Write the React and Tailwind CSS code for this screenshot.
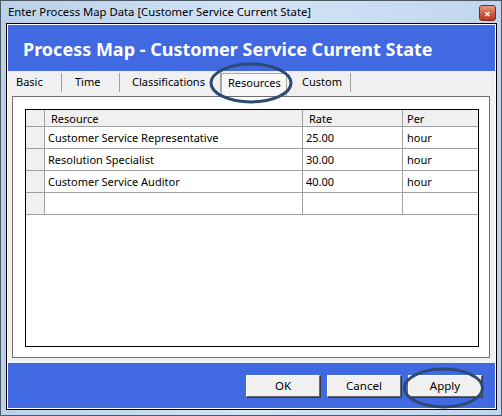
const tabs = [
  { label: 'Basic', w: 'w-[50px]', pl: 'pl-[4px]' },
  { label: 'Time', w: 'w-[58px]', pl: 'pl-[13px]' },
  { label: 'Classifications', w: 'w-[101px]', pl: 'pl-[12px]' },
  { label: 'Resources', w: 'w-[66px]', pl: 'pl-[6px]', active: true },
  { label: 'Custom', w: 'w-[64px]', pl: 'pl-[15px]' },
]

const rows = [
  { resource: 'Customer Service Representative', rate: '25.00', per: 'hour' },
  { resource: 'Resolution Specialist', rate: '30.00', per: 'hour' },
  { resource: 'Customer Service Auditor', rate: '40.00', per: 'hour' },
  { resource: '', rate: '', per: '' },
]

function WinButton({ children }) {
  return (
    <button className="w-[74px] h-[22px] bg-[#f0f0f0] border border-t-white border-l-white border-r-[#696969] border-b-[#696969] shadow-[1px_1px_0_#3a3a3a] text-[11.5px] text-black">
      {children}
    </button>
  )
}

export default function App() {
  return (
    <div
      className="relative w-[502px] h-[416px] border border-[#4e5966] bg-gradient-to-r from-[#b9d1ea] via-[#d3e4f6] to-[#c0d6ee] flex flex-col"
      style={{ fontFamily: '"Noto Sans", "Open Sans", sans-serif' }}
    >
      {/* title bar */}
      <div className="h-[22px] flex items-center justify-between pl-[7px] pr-[5px]">
        <span className="text-[11.3px] text-black leading-none">
          Enter Process Map Data [Customer Service Current State]
        </span>
        <div className="w-[17px] h-[16px] mt-[2px] rounded-[3px] border border-[#7a2a1a] bg-gradient-to-b from-[#e49a82] via-[#cf5f43] to-[#b8391e] flex items-center justify-center text-white text-[11px] font-bold leading-none">
          ×
        </div>
      </div>

      {/* client area */}
      <div className="ml-[5px] mr-[4px] h-[387px] border border-black">
        <div className="h-full border border-white flex flex-col bg-[#f0f0f0]">
          <div className="h-[46px] bg-[#4169e1] flex items-center pl-[15px] pt-[2px]">
            <span className="text-white font-bold text-[18px] leading-none">
              Process Map - Customer Service Current State
            </span>
          </div>

          {/* tab strip */}
          <div className="h-[25px] flex items-start pt-[2px] pl-[4px] text-[11px] text-black">
            {tabs.map((t) =>
              t.active ? (
                <div
                  key={t.label}
                  className={`${t.w} ${t.pl} h-[23px] bg-[#f8f8f8] border border-b-0 border-[#a9a9a9] leading-[16px] pt-[1px]`}
                >
                  {t.label}
                </div>
              ) : (
                <div
                  key={t.label}
                  className={`${t.w} ${t.pl} h-[19px] border-r border-[#a0a0a0] leading-[16px] pt-[1px]`}
                >
                  {t.label}
                </div>
              )
            )}
          </div>

          {/* tab page */}
          <div className="mx-[4px] mr-[5px] h-[262px] border border-[#6e6e6e] bg-white pt-[12px] pl-[12px] pr-[10px]">
            <div className="h-[238px] border border-black text-[11px] text-black">
              <div className="flex h-[17px] bg-[#f0f0f0] border-b border-[#a0a0a0]">
                <div className="w-[19px] border-r border-[#a0a0a0]" />
                <div className="w-[258px] border-r border-[#a0a0a0] pl-[6px] leading-[18px]">Resource</div>
                <div className="w-[100px] border-r border-[#a0a0a0] pl-[6px] leading-[18px]">Rate</div>
                <div className="flex-1 pl-[4px] leading-[18px]">Per</div>
              </div>
              {rows.map((r, i) => (
                <div key={i} className="flex h-[22px] border-b border-[#a0a0a0]">
                  <div className="w-[19px] bg-[#f0f0f0] border-r border-[#a0a0a0]" />
                  <div className="w-[258px] border-r border-[#a0a0a0] pl-[3px] leading-[22px]">{r.resource}</div>
                  <div className="w-[100px] border-r border-[#a0a0a0] pl-[3px] leading-[22px]">{r.rate}</div>
                  <div className="flex-1 pl-[4px] leading-[22px]">{r.per}</div>
                </div>
              ))}
            </div>
          </div>

          <div className="h-[5px]" />

          {/* button bar */}
          <div className="flex-1 bg-[#4169e1] flex justify-end items-start gap-[7px] pt-[12px] pr-[13px]">
            <WinButton>OK</WinButton>
            <WinButton>Cancel</WinButton>
            <WinButton>Apply</WinButton>
          </div>
        </div>
      </div>

      {/* callout rings */}
      <svg className="absolute left-[-1px] top-[-1px] pointer-events-none" width="502" height="416">
        <ellipse cx="251" cy="83" rx="40" ry="19" fill="none" stroke="#2c4a72" strokeWidth="3" />
        <ellipse cx="443.5" cy="388" rx="39" ry="19" fill="none" stroke="#2c4a72" strokeWidth="3" />
      </svg>
    </div>
  )
}
